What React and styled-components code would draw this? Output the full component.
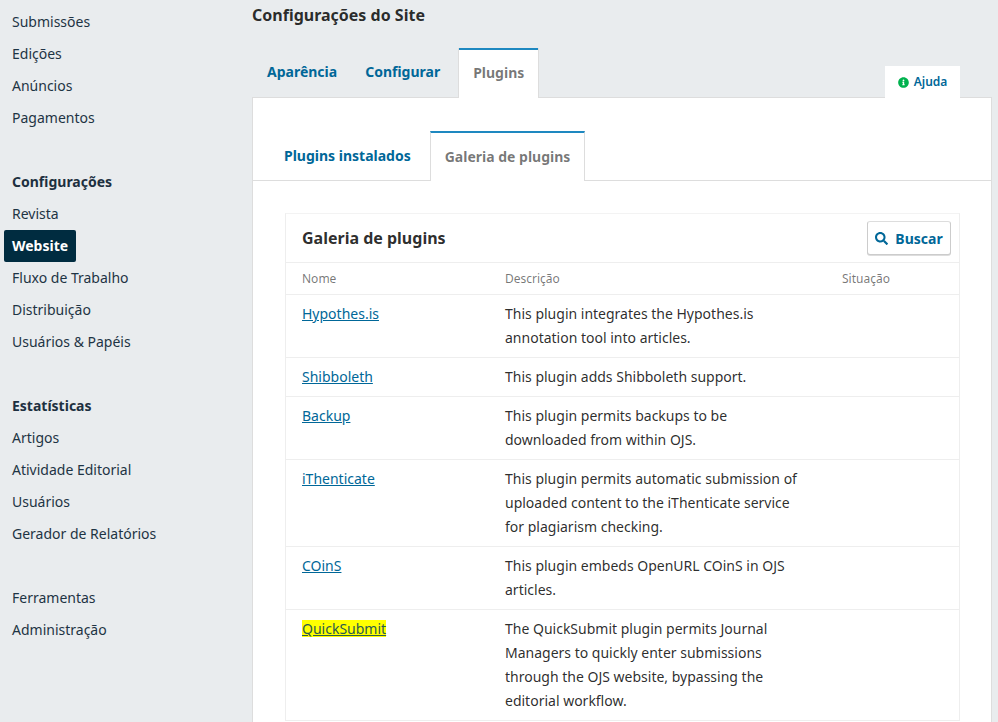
import styled, { createGlobalStyle } from "styled-components";
import { FaInfoCircle, FaSearch } from "react-icons/fa";

const navGroups = [
  { items: ["Submissões", "Edições", "Anúncios", "Pagamentos"] },
  { title: "Configurações", items: ["Revista", "Website", "Fluxo de Trabalho", "Distribuição", "Usuários & Papéis"] },
  { title: "Estatísticas", items: ["Artigos", "Atividade Editorial", "Usuários", "Gerador de Relatórios"] },
  { items: ["Ferramentas", "Administração"] },
];

const plugins = [
  { name: "Hypothes.is", description: "This plugin integrates the Hypothes.is annotation tool into articles." },
  { name: "Shibboleth", description: "This plugin adds Shibboleth support." },
  { name: "Backup", description: "This plugin permits backups to be downloaded from within OJS." },
  { name: "iThenticate", description: "This plugin permits automatic submission of uploaded content to the iThenticate service for plagiarism checking." },
  { name: "COinS", description: "This plugin embeds OpenURL COinS in OJS articles." },
  { name: "QuickSubmit", description: "The QuickSubmit plugin permits Journal Managers to quickly enter submissions through the OJS website, bypassing the editorial workflow.", marked: true },
];

const App = () => {
  return (
    <Page>
      <GlobalStyle />
      <Sidebar>
        {navGroups.map((group, index) => (
          <NavGroup key={index}>
            {group.title && <NavTitle>{group.title}</NavTitle>}
            {group.items.map((item) => (
              <NavItem key={item} $active={item === "Website"}>{item}</NavItem>
            ))}
          </NavGroup>
        ))}
      </Sidebar>
      <Main>
        <PageTitle>Configurações do Site</PageTitle>
        <TopTabs>
          <TopTab>Aparência</TopTab>
          <TopTab>Configurar</TopTab>
          <TopTab $active>Plugins</TopTab>
          <HelpTab>
            <FaInfoCircle size={11} color="#00b24e" />
            Ajuda
          </HelpTab>
        </TopTabs>
        <Panel>
          <InnerTabs>
            <InnerTab>Plugins instalados</InnerTab>
            <InnerTab $active>Galeria de plugins</InnerTab>
          </InnerTabs>
          <Card>
            <CardHeader>
              <CardTitle>Galeria de plugins</CardTitle>
              <SearchButton>
                <FaSearch size={13} />
                Buscar
              </SearchButton>
            </CardHeader>
            <HeadRow>
              <span>Nome</span>
              <span>Descrição</span>
              <span>Situação</span>
            </HeadRow>
            {plugins.map((plugin) => (
              <Row key={plugin.name}>
                <PluginLink $marked={plugin.marked}>{plugin.name}</PluginLink>
                <Description>{plugin.description}</Description>
              </Row>
            ))}
          </Card>
        </Panel>
      </Main>
    </Page>
  );
};

export default App;

const GlobalStyle = createGlobalStyle`
  html, body {
    margin: 0;
    height: 100%;
    overflow: hidden;
  }
  body {
    font-family: "Noto Sans", "Open Sans", sans-serif;
    font-size: 14px;
    line-height: 24px;
    color: rgba(0, 0, 0, 0.84);
    background: #e9ecee;
  }
`;

const Page = styled.div`
  display: flex;
  height: 722px;
  overflow: hidden;
  background: #e9ecee;
`;

const Sidebar = styled.nav`
  width: 252px;
  flex-shrink: 0;
  box-sizing: border-box;
  padding: 6px 0 0 4px;
  display: flex;
  flex-direction: column;
  gap: 32px;
`;

const NavGroup = styled.div`
  display: flex;
  flex-direction: column;
  align-items: flex-start;
`;

const NavTitle = styled.div`
  height: 32px;
  line-height: 32px;
  padding: 0 8px;
  font-weight: 700;
  color: #1d3040;
`;

const NavItem = styled.a`
  height: 32px;
  line-height: 32px;
  padding: 0 8px;
  border-radius: 2px;
  color: ${(props) => (props.$active ? "#fff" : "#1e3444")};
  background: ${(props) => (props.$active ? "#002c40" : "transparent")};
  font-weight: ${(props) => (props.$active ? 700 : 400)};
`;

const Main = styled.main`
  width: 740px;
  flex-shrink: 0;
`;

const PageTitle = styled.h1`
  margin: 0;
  height: 48px;
  padding-top: 3px;
  box-sizing: border-box;
  font-size: 16px;
  line-height: 24px;
  font-weight: 700;
  color: rgba(0, 0, 0, 0.84);
`;

const TopTabs = styled.div`
  display: flex;
  align-items: stretch;
  height: 49px;
  padding-left: 1px;
`;

const TopTab = styled.a`
  padding: 0 14px;
  line-height: 47px;
  font-weight: 700;
  color: ${(props) => (props.$active ? "rgba(0,0,0,0.54)" : "#006798")};
  ${(props) =>
    props.$active &&
    `
    background: #fff;
    border-top: 2px solid #1e88c0;
    line-height: 46px;
    height: 48px;
    margin-left: 5px;
    box-shadow: 1px 0 0 #ddd, -1px 0 0 #ddd;
    position: relative;
    z-index: 1;
    margin-bottom: -1px;
  `}
`;

const HelpTab = styled.a`
  margin: 18px 32px 0 auto;
  width: 75px;
  height: 32px;
  background: #fff;
  display: flex;
  align-items: center;
  justify-content: center;
  gap: 5px;
  font-size: 12px;
  font-weight: 600;
  color: #006798;
  position: relative;
  z-index: 1;
`;

const Panel = styled.section`
  background: #fff;
  border: 1px solid #ddd;
  border-bottom: none;
  box-sizing: border-box;
  height: 640px;
  overflow: hidden;
`;

const InnerTabs = styled.div`
  display: flex;
  height: 50px;
  margin-top: 33px;
  padding-left: 17px;
  border-bottom: 1px solid #ddd;
  box-sizing: content-box;
  height: 49px;
`;

const InnerTab = styled.a`
  padding: 0 14px;
  line-height: 49px;
  font-weight: 700;
  color: ${(props) => (props.$active ? "rgba(0,0,0,0.54)" : "#006798")};
  ${(props) =>
    props.$active &&
    `
    background: #fff;
    border-top: 2px solid #1e88c0;
    border-left: 1px solid #ddd;
    border-right: 1px solid #ddd;
    height: 48px;
    line-height: 47px;
    margin-left: 5px;
  `}
`;

const Card = styled.div`
  margin: 32px 31px 0 32px;
  border-left: 1px solid #eee;
  border-right: 1px solid #eee;
  border-top: 1px solid #f3f3f3;
`;

const CardHeader = styled.div`
  height: 48px;
  display: flex;
  align-items: center;
  justify-content: space-between;
  padding: 0 8px 0 16px;
  border-bottom: 1px solid #eee;
`;

const CardTitle = styled.h2`
  margin: 0;
  font-size: 16px;
  font-weight: 700;
  color: rgba(0, 0, 0, 0.84);
`;

const SearchButton = styled.button`
  height: 34px;
  width: 84px;
  box-sizing: border-box;
  display: flex;
  align-items: center;
  justify-content: center;
  gap: 7px;
  padding: 0;
  font: 700 14px "Noto Sans", sans-serif;
  color: #006798;
  background: #fff;
  border: 1px solid rgba(0, 0, 0, 0.2);
  border-top-color: #ddd;
  border-radius: 3px;
  box-shadow: 0 1px 0 #ddd;
`;

const HeadRow = styled.div`
  display: grid;
  grid-template-columns: 203px 337px 1fr;
  height: 31px;
  padding-left: 16px;
  align-items: center;
  font-size: 12px;
  color: rgba(0, 0, 0, 0.54);
  border-bottom: 1px solid #eee;
`;

const Row = styled.div`
  display: grid;
  grid-template-columns: 203px 292px;
  padding: 7px 0 7px 16px;
  border-bottom: 1px solid #eee;
`;

const PluginLink = styled.a`
  justify-self: start;
  align-self: start;
  color: #006798;
  text-decoration: underline;
  line-height: 24px;
  ${(props) => props.$marked && "background: linear-gradient(#ffff00, #ffff00) 0 3px / 100% 17px no-repeat; color: #2a5a50;"}
`;

const Description = styled.div`
  color: rgba(0, 0, 0, 0.84);
`;
